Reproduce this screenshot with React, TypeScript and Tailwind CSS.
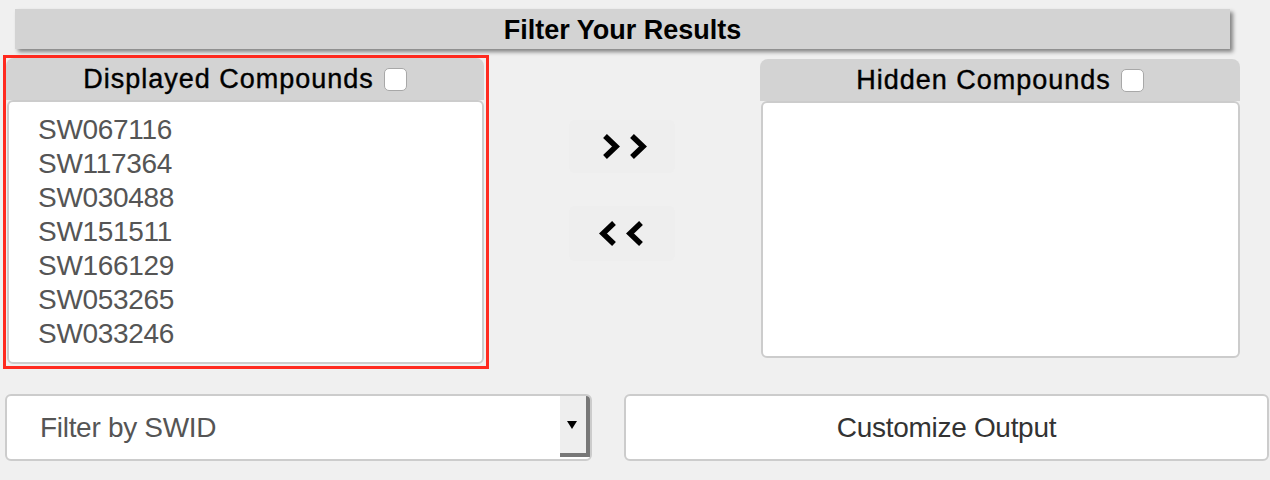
const compounds = [
  "SW067116",
  "SW117364",
  "SW030488",
  "SW151511",
  "SW166129",
  "SW053265",
  "SW033246",
];

function Checkbox() {
  return (
    <span className="inline-block h-[23px] w-[23px] rounded-[5px] border border-[#a8a8a8] bg-white" />
  );
}

function PanelHeader({ title }: { title: string }) {
  return (
    <div className="flex h-[42px] items-center justify-center gap-[10px] rounded-t-[8px] bg-[#d3d3d3] pt-px text-[27px] tracking-[1px] text-black [-webkit-text-stroke:0.4px_black]">
      <span>{title}</span>
      <Checkbox />
    </div>
  );
}

function Chevrons({ dir }: { dir: "right" | "left" }) {
  const pts =
    dir === "right"
      ? ["4,3 15,13.5 4,24", "31,3 42,13.5 31,24"]
      : ["15,3 4,13.5 15,24", "42,3 31,13.5 42,24"];
  return (
    <svg width="47" height="27" viewBox="0 0 47 27">
      {pts.map((p) => (
        <polyline
          key={p}
          points={p}
          fill="none"
          stroke="#000"
          strokeWidth="5.5"
          strokeLinejoin="miter"
        />
      ))}
    </svg>
  );
}

export default function App() {
  return (
    <main className="h-[480px] w-[1270px] bg-[#f0f0f0] pt-[9px] font-['Liberation_Sans',Arial,sans-serif]">
      {/* Title bar */}
      <div className="ml-[15px] flex h-[40px] w-[1215px] items-center justify-center bg-[#d3d3d3] pt-[3px] text-[27px] font-bold text-black shadow-[3px_3px_4px_rgba(0,0,0,0.45)]">
        Filter Your Results
      </div>

      <div className="mt-[6px] flex items-start">
        {/* Displayed compounds */}
        <div className="ml-[3px] w-[486px] border-[3px] border-[#ff2a1f] pb-[2px]">
          <div className="mr-[2px]">
            <PanelHeader title="Displayed Compounds" />
          </div>
          <div className="ml-px mr-[2px] h-[264px] rounded-[6px] border-2 border-[#cccccc] bg-white pl-[29px] pt-[11px] text-[28px] leading-[34px] tracking-[-0.3px] text-[#555555]">
            {compounds.map((c) => (
              <div key={c}>{c}</div>
            ))}
          </div>
        </div>

        {/* Move buttons */}
        <div className="flex w-[271px] flex-col gap-[33px] pl-[80px] pt-[65px]">
          <button className="flex h-[53px] w-[106px] items-center justify-center rounded-[6px] bg-[#eeeeee] pl-[4px]">
            <Chevrons dir="right" />
          </button>
          <button className="flex h-[55px] w-[106px] items-center justify-center rounded-[6px] bg-[#eeeeee]">
            <Chevrons dir="left" />
          </button>
        </div>

        {/* Hidden compounds */}
        <div className="mt-[4px] w-[480px]">
          <PanelHeader title="Hidden Compounds" />
          <div className="ml-px h-[257px] rounded-[6px] border-2 border-[#cccccc] bg-white" />
        </div>
      </div>

      {/* Bottom controls */}
      <div className="mt-[25px] flex items-start">
        <div className="ml-[5px] flex h-[67px] w-[587px] overflow-hidden rounded-[6px] border-2 border-[#cccccc] bg-white">
          <div className="flex flex-1 items-center pl-[33px] text-[28px] tracking-[-0.3px] text-[#555555]">
            Filter by SWID
          </div>
          <div className="mb-[2px] flex w-[30px] items-center justify-center border-b-[4px] border-r-[4px] border-[#777777] bg-[#eeeeee] pr-[2px]">
            <span className="block h-0 w-0 border-x-[5px] border-t-[8px] border-x-transparent border-t-black" />
          </div>
        </div>
        <button className="ml-[32px] flex h-[67px] w-[645px] items-center justify-center rounded-[6px] border-2 border-[#cccccc] bg-white text-[28px] tracking-[-0.3px] text-[#333333]">
          Customize Output
        </button>
      </div>
    </main>
  );
}
